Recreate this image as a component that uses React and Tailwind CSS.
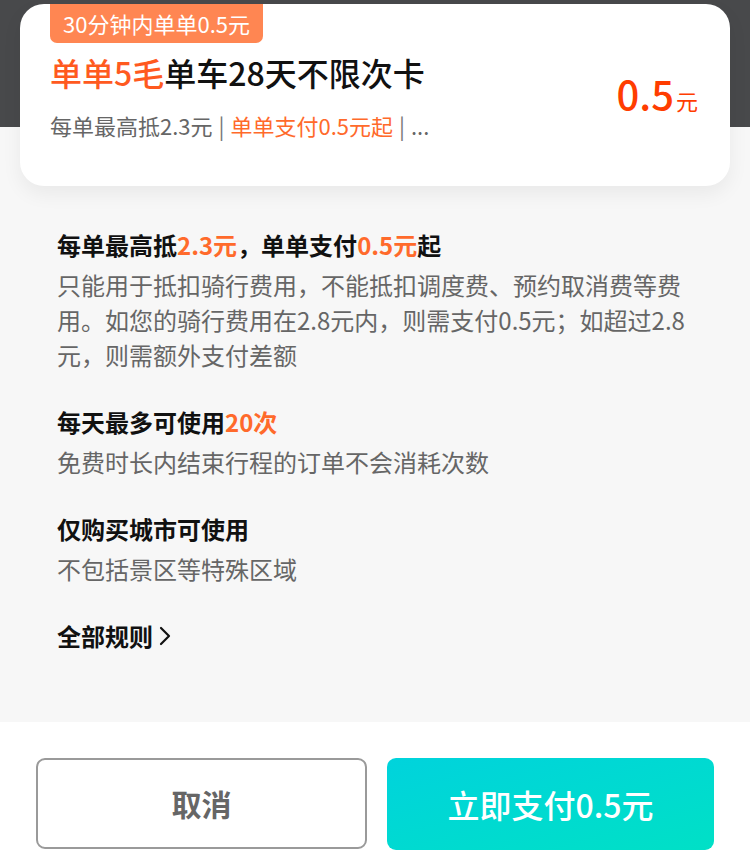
import React from "react";

const font = { fontFamily: '"Noto Sans CJK SC", "Noto Sans", sans-serif' };

const rules = [
  {
    title: (
      <>
        每单最高抵<span className="text-[#ff6a2b]">2.3元</span>，单单支付
        <span className="text-[#ff6a2b]">0.5元</span>起
      </>
    ),
    lines: [
      "只能用于抵扣骑行费用，不能抵扣调度费、预约取消费等费",
      "用。如您的骑行费用在2.8元内，则需支付0.5元；如超过2.8",
      "元，则需额外支付差额",
    ],
  },
  {
    title: (
      <>
        每天最多可使用<span className="text-[#ff6a2b]">20次</span>
      </>
    ),
    lines: ["免费时长内结束行程的订单不会消耗次数"],
  },
  {
    title: "仅购买城市可使用",
    lines: ["不包括景区等特殊区域"],
  },
];

function Pipe() {
  return <span className="mx-[6px] text-[#777]">|</span>;
}

export default function App() {
  return (
    <div
      className="w-[750px] h-[855px] flex flex-col bg-[#f7f7f7] overflow-hidden"
      style={font}
    >
      <div className="relative flex-1 flex flex-col">
        <div className="absolute left-0 right-0 top-0 h-[127px] bg-[#48494b]" />

        <div className="relative mt-[4px] mx-[20px] h-[182px] bg-white rounded-[24px] shadow-[0_8px_20px_rgba(0,0,0,0.06)] pl-[30px] pr-[32px] flex">
          <div className="flex-1 flex flex-col">
            <div className="self-start h-[39px] px-[13px] bg-[#ff8652] rounded-b-[7px] text-white text-[22px] leading-[39px]">
              30分钟内单单0.5元
            </div>
            <div className="mt-[9px] text-[32px] leading-[40px] font-medium text-[#111]">
              <span className="text-[#ff5a1f]">单单5毛</span>单车28天不限次卡
            </div>
            <div className="mt-[18px] text-[22px] leading-[30px] text-[#666] whitespace-nowrap">
              每单最高抵2.3元
              <Pipe />
              <span className="text-[#ff6a2b]">单单支付0.5元起</span>
              <Pipe />
              ...
            </div>
          </div>
          <div className="flex items-baseline mt-[66px] self-start text-[#ff3d00]">
            <span className="text-[40px] leading-[46px] font-medium">0.5</span>
            <span className="text-[22px] ml-[2px]">元</span>
          </div>
        </div>

        <div className="relative pl-[57px] pr-[30px] pt-[43px] flex flex-col gap-[34px]">
          {rules.map((r, i) => (
            <div key={i} className="flex flex-col">
              <div className="text-[24px] leading-[32px] font-bold text-[#111]">{r.title}</div>
              <div className="mt-[6px] text-[24px] leading-[35px] text-[#666]">
                {r.lines.map((l, j) => (
                  <div key={j} className="whitespace-nowrap">{l}</div>
                ))}
              </div>
            </div>
          ))}
          <div className="flex items-center text-[24px] leading-[32px] font-bold text-[#111]">
            全部规则
            <svg width="12" height="20" viewBox="0 0 12 20" className="ml-[6px]">
              <path d="M2 2 L10 10 L2 18" fill="none" stroke="#111" strokeWidth="2.2" strokeLinecap="round" strokeLinejoin="round" />
            </svg>
          </div>
        </div>
      </div>

      <div className="h-[133px] bg-white flex gap-[20px] pl-[36px] pr-[36px] pt-[36px]">
        <button className="w-[331px] h-[91px] rounded-[9px] border-2 border-[#9a9a9a] text-[#666] text-[30px] font-bold">
          取消
        </button>
        <button className="w-[327px] h-[92px] rounded-[9px] bg-gradient-to-br from-[#00d3dc] to-[#00e0c6] text-white text-[32px] font-medium">
          立即支付0.5元
        </button>
      </div>
    </div>
  );
}
